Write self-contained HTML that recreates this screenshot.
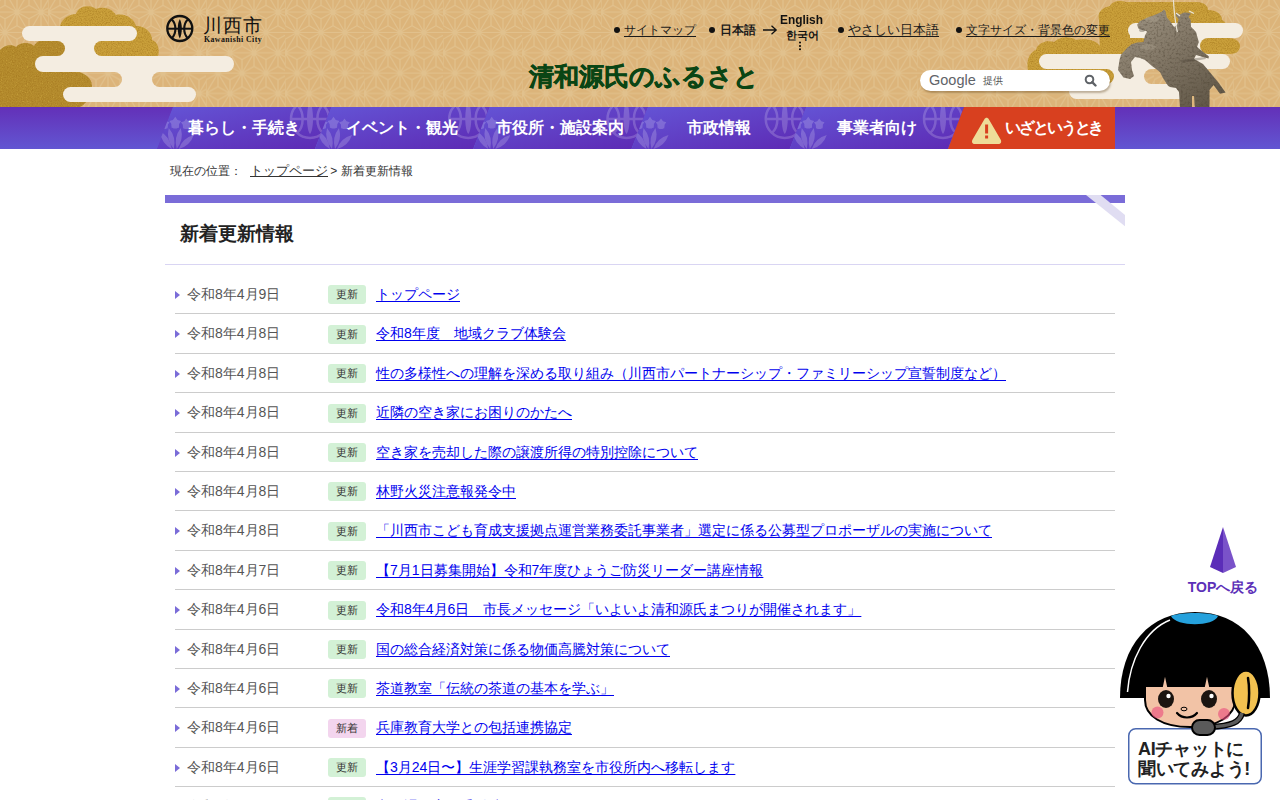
<!DOCTYPE html>
<html lang="ja"><head><meta charset="utf-8"><title>新着更新情報</title>
<style>
html,body{margin:0;padding:0;background:#fff;}
body{width:1280px;height:800px;overflow:hidden;position:relative;font-family:"Liberation Sans",sans-serif;color:#333;}
.abs{position:absolute;}
#hdr{position:absolute;left:0;top:0;width:1280px;height:107px;background:#dcb47a;overflow:hidden;}
#hdr svg.bg{position:absolute;left:0;top:0;}
.tl{position:absolute;top:22px;font-size:12px;line-height:16px;color:#1a1a1a;white-space:nowrap;}
.tl u{text-decoration:underline;text-underline-offset:2px;}
.dot{position:absolute;width:6px;height:6px;border-radius:50%;background:#111;}
#nav{position:absolute;left:0;top:107px;width:1280px;height:42px;background:linear-gradient(180deg,#6330b8 0%,#6256d2 100%);overflow:hidden;}
#nav .it{position:absolute;top:0;height:42px;color:#fff;font-weight:bold;font-size:16px;line-height:42px;text-align:center;white-space:nowrap;}
#crumb{position:absolute;left:170px;top:163px;font-size:12px;line-height:16px;color:#333;white-space:nowrap;}
#crumb a{color:#333;}
#bar{position:absolute;left:165px;top:195px;width:960px;height:8px;background:#7a6cd8;}
#h1{position:absolute;left:180px;top:220.5px;font-size:19px;line-height:26px;font-weight:bold;color:#222;margin:0;}
#hl{position:absolute;left:165px;top:264px;width:960px;height:1px;background:#d9d5f3;}
ul#list{position:absolute;left:175px;top:275px;width:940px;margin:0;padding:0;list-style:none;}
#list li{position:relative;height:38.4px;border-bottom:1px solid #ccc;font-size:14px;line-height:38.4px;white-space:nowrap;}
#list .arr{position:absolute;left:0;top:16px;width:0;height:0;border-left:5px solid #7a6cd8;border-top:4px solid transparent;border-bottom:4px solid transparent;}
#list .dt{position:absolute;left:12px;top:0;color:#555;}
#list .bd{position:absolute;left:153px;top:10.4px;width:38px;height:19px;line-height:19px;border-radius:3px;background:#d3f1d6;color:#333;font-size:11px;text-align:center;}
#list .bd.nw{background:#f3d5ee;}
#list a{position:absolute;left:201px;top:0;color:#0000ee;text-decoration:underline;text-underline-offset:2px;}
#totop{position:absolute;left:1180px;top:525px;width:86px;height:72px;}
#totop span{position:absolute;left:0;top:53px;width:86px;text-align:center;font-size:14px;font-weight:bold;color:#5c30b8;line-height:18px;}
</style></head><body>
<div id="hdr">
<svg class="bg" width="1280" height="107" viewBox="0 0 1280 107">
<defs>
<pattern id="asa" patternUnits="userSpaceOnUse" x="48" y="12.1" width="79" height="40.666">
<path d="M-1 0L80 0M-1 20.33L80 20.33M-1 40.67L80 40.67M-24 0L-36 20.33M-24 0L-12 20.33M0 0L-12 20.33M0 0L12 20.33M24 0L12 20.33M24 0L36 20.33M48 0L36 20.33M48 0L60 20.33M72 0L60 20.33M72 0L84 20.33M96 0L84 20.33M96 0L108 20.33M-12 6.78L-24 0M-12 6.78L0 0M-12 6.78L-12 20.33M12 6.78L0 0M12 6.78L24 0M12 6.78L12 20.33M36 6.78L24 0M36 6.78L48 0M36 6.78L36 20.33M60 6.78L48 0M60 6.78L72 0M60 6.78L60 20.33M84 6.78L72 0M84 6.78L96 0M84 6.78L84 20.33M108 6.78L96 0M108 6.78L120 0M108 6.78L108 20.33M0 13.56L-12 20.33M0 13.56L12 20.33M0 13.56L0 0M24 13.56L12 20.33M24 13.56L36 20.33M24 13.56L24 0M48 13.56L36 20.33M48 13.56L60 20.33M48 13.56L48 0M72 13.56L60 20.33M72 13.56L84 20.33M72 13.56L72 0M96 13.56L84 20.33M96 13.56L108 20.33M96 13.56L96 0M120 13.56L108 20.33M120 13.56L132 20.33M120 13.56L120 0M-12 20.33L-24 40.67M-12 20.33L0 40.67M12 20.33L0 40.67M12 20.33L24 40.67M36 20.33L24 40.67M36 20.33L48 40.67M60 20.33L48 40.67M60 20.33L72 40.67M84 20.33L72 40.67M84 20.33L96 40.67M108 20.33L96 40.67M108 20.33L120 40.67M0 27.11L-12 20.33M0 27.11L12 20.33M0 27.11L0 40.67M24 27.11L12 20.33M24 27.11L36 20.33M24 27.11L24 40.67M48 27.11L36 20.33M48 27.11L60 20.33M48 27.11L48 40.67M72 27.11L60 20.33M72 27.11L84 20.33M72 27.11L72 40.67M96 27.11L84 20.33M96 27.11L108 20.33M96 27.11L96 40.67M120 27.11L108 20.33M120 27.11L132 20.33M120 27.11L120 40.67M-12 33.89L-24 40.67M-12 33.89L0 40.67M-12 33.89L-12 20.33M12 33.89L0 40.67M12 33.89L24 40.67M12 33.89L12 20.33M36 33.89L24 40.67M36 33.89L48 40.67M36 33.89L36 20.33M60 33.89L48 40.67M60 33.89L72 40.67M60 33.89L60 20.33M84 33.89L72 40.67M84 33.89L96 40.67M84 33.89L84 20.33M108 33.89L96 40.67M108 33.89L120 40.67M108 33.89L108 20.33" stroke="#e1c18d" stroke-width="1.2" fill="none"/>
</pattern>
<linearGradient id="gold" x1="0" y1="0" x2="1" y2="1">
<stop offset="0" stop-color="#c9a232"/><stop offset="0.5" stop-color="#b8922c"/><stop offset="1" stop-color="#caa63a"/>
</linearGradient>
<filter id="goldtex" x="0" y="0" width="100%" height="100%" color-interpolation-filters="sRGB"><feTurbulence type="fractalNoise" baseFrequency="0.8" numOctaves="2" seed="7" result="n"/><feColorMatrix in="n" type="matrix" values="0 0 0 0 0.62  0 0 0 0 0.44  0 0 0 0 0.1  1.4 0 0 0 -0.6" result="d"/><feColorMatrix in="n" type="matrix" values="0 0 0 0 0.88  0 0 0 0 0.74  0 0 0 0 0.3  0 -1.5 0 0 0.62" result="l"/><feComposite in="d" in2="SourceAlpha" operator="in" result="d2"/><feComposite in="l" in2="SourceAlpha" operator="in" result="l2"/><feMerge><feMergeNode in="SourceGraphic"/><feMergeNode in="d2"/><feMergeNode in="l2"/></feMerge></filter>
<mask id="mL" maskUnits="userSpaceOnUse" x="0" y="0" width="300" height="107">
<rect x="22" y="26" width="115" height="15" rx="7.5" fill="#fff"/>
<rect x="35" y="56" width="199" height="16" rx="8" fill="#fff"/>
<rect x="63" y="87" width="133" height="15" rx="7.5" fill="#fff"/>
<rect x="45" y="36" width="70" height="24" fill="#fff"/>
<rect x="100" y="67" width="75" height="24" fill="#fff"/>
<rect x="-60" y="41" width="125" height="15" rx="7.5" fill="#000"/>
<rect x="94" y="41" width="120" height="15" rx="7.5" fill="#000"/>
<rect x="-60" y="72" width="182" height="15" rx="7.5" fill="#000"/>
<rect x="152" y="72" width="120" height="15" rx="7.5" fill="#000"/>
</mask>
<mask id="mR" maskUnits="userSpaceOnUse" x="1000" y="0" width="280" height="107">
<rect x="1128" y="23" width="115" height="15" rx="7.5" fill="#fff"/>
<rect x="1039" y="54" width="191" height="15" rx="7.5" fill="#fff"/>
<rect x="1069" y="84" width="118" height="15" rx="7.5" fill="#fff"/>
<rect x="1130" y="33" width="90" height="26" fill="#fff"/>
<rect x="1095" y="64" width="60" height="25" fill="#fff"/>
<rect x="1000" y="38" width="150" height="16" rx="8" fill="#000"/>
<rect x="1200" y="38" width="120" height="16" rx="8" fill="#000"/>
<rect x="1000" y="69" width="114" height="15" rx="7.5" fill="#000"/>
<rect x="1144" y="69" width="150" height="15" rx="7.5" fill="#000"/>
</mask>
</defs>
<rect width="1280" height="107" fill="url(#asa)"/>
<!-- left gold cloud -->
<g fill="#c99f3a" filter="url(#goldtex)">
<path d="M60 56 L60 26 C62 18 70 14 76 14 C78 6 90 4 96 9 C102 6 112 8 116 15 C124 13 134 18 136 26 C146 26 152 33 152 40 C158 42 160 50 158 56 Z"/>
<path fill="#b58c2e" d="M0 107 L0 50 C4 45 12 44 16 47 C20 42 30 42 34 46 C36 42 40 40 46 40 L66 40 L66 70 C80 70 92 76 92 86 C92 96 86 104 80 107 Z"/>
</g>
<rect x="0" y="0" width="240" height="107" fill="#f4ede1" mask="url(#mL)"/>
<!-- right gold cloud -->
<g fill="#c99f3a" filter="url(#goldtex)">
<path d="M1099 20 C1097 12 1102 8 1110 6 C1112 1 1120 0 1126 2 L1196 2 C1204 2 1208 6 1208 10 C1216 10 1222 14 1222 20 C1226 22 1228 26 1226 30 L1228 38 C1236 38 1240 42 1240 46 C1240 51 1236 54 1230 54 L1100 54 Z"/>
<path d="M1028 70 C1026 60 1030 52 1036 50 C1038 42 1048 40 1054 42 C1060 36 1070 36 1076 40 C1086 38 1096 40 1100 46 L1140 46 L1140 69 L1110 69 C1116 72 1116 80 1112 84 L1028 84 Z"/>
</g>
<rect x="1000" y="0" width="280" height="107" fill="#f4ede1" mask="url(#mR)"/>
</svg>
<!-- logo -->
<svg class="abs" style="left:165px;top:14px" width="30" height="30" viewBox="0 0 30 30">
<circle cx="14.8" cy="14.5" r="12.5" fill="none" stroke="#111" stroke-width="2.3"/>
<path d="M2.3 14.7H27.3" stroke="#111" stroke-width="2"/>
<path d="M14.8 5C12.1 9.5 12.1 19.9 14.8 24.4C17.5 19.9 17.5 9.5 14.8 5Z" fill="#111"/>
<path d="M6.8 5.4C11.6 10 11.6 19.6 6.8 24.2M22.8 5.4C18 10 18 19.6 22.8 24.2" stroke="#111" stroke-width="2.1" fill="none"/>
</svg>
<div class="abs" style="left:203px;top:14.5px;font-size:19px;line-height:22px;color:#111;letter-spacing:1px;">川西市</div>
<div class="abs" style="left:204px;top:34.5px;font-family:'Liberation Serif',serif;font-weight:bold;font-size:7.8px;line-height:9px;color:#111;letter-spacing:0.45px;">Kawanishi City</div>
<!-- top links -->
<div class="dot" style="left:614px;top:27px"></div>
<div class="tl" style="left:624px"><u>サイトマップ</u></div>
<div class="dot" style="left:709px;top:27px"></div>
<div class="tl" style="left:720px;font-weight:bold;">日本語</div>
<svg class="abs" style="left:762px;top:24px" width="16" height="12" viewBox="0 0 16 12"><path d="M1 6H14M9.5 1.8L14.2 6L9.5 10.2" stroke="#111" stroke-width="1.3" fill="none"/></svg>
<div class="abs" style="left:780px;top:12px;font-size:13px;line-height:15px;font-weight:bold;color:#111;transform:scaleX(0.915);transform-origin:0 0;">English</div>
<div class="abs" style="left:786px;top:29px;font-size:10.5px;line-height:12px;color:#111;font-weight:bold;">한국어</div>
<svg class="abs" style="left:798px;top:41px" width="4" height="10" viewBox="0 0 4 10"><circle cx="2" cy="1.6" r="1"/><circle cx="2" cy="4.9" r="1"/><circle cx="2" cy="8.2" r="1"/></svg>
<div class="dot" style="left:838px;top:27px"></div>
<div class="tl" style="left:848px;font-size:13.3px"><u>やさしい日本語</u></div>
<div class="dot" style="left:956px;top:27px"></div>
<div class="tl" style="left:966px"><u>文字サイズ・背景色の変更</u></div>
<!-- title -->
<div class="abs" style="left:529px;top:61px;font-family:'Liberation Serif',serif;font-weight:bold;font-size:25px;line-height:32px;color:#0a4514;-webkit-text-stroke:0.6px #0a4514;white-space:nowrap;">清和源氏のふるさと</div>
<!-- search -->
<div class="abs" style="left:920px;top:70px;width:190px;height:21px;border-radius:11px;background:#fff;box-shadow:1px 2px 2px rgba(90,60,20,0.35);">
<span class="abs" style="left:9px;top:1px;font-size:14.5px;line-height:18px;color:#5f6368;">Google</span>
<span class="abs" style="left:63px;top:4px;font-size:10px;line-height:13px;color:#555;">提供</span>
<svg class="abs" style="left:164px;top:4px" width="13" height="13" viewBox="0 0 13 13"><circle cx="5.5" cy="5.5" r="3.8" fill="none" stroke="#5f6368" stroke-width="2"/><path d="M8.2 8.2L11.5 11.5" stroke="#5f6368" stroke-width="2.4" stroke-linecap="round"/></svg>
</div>
<!-- statue -->
<svg class="abs" style="left:1110px;top:0" width="130" height="107" viewBox="0 0 130 107">
<defs><filter id="stex" x="0" y="0" width="100%" height="100%" color-interpolation-filters="sRGB"><feTurbulence type="fractalNoise" baseFrequency="0.45" numOctaves="2" seed="11" result="n"/><feColorMatrix in="n" type="matrix" values="0 0 0 0 0.3  0 0 0 0 0.26  0 0 0 0 0.2  1.3 0 0 0 -0.62" result="d"/><feComposite in="d" in2="SourceAlpha" operator="in" result="d2"/><feMerge><feMergeNode in="SourceGraphic"/><feMergeNode in="d2"/></feMerge></filter><linearGradient id="stg" x1="0" y1="0" x2="0.8" y2="1"><stop offset="0" stop-color="#a09685"/><stop offset="0.45" stop-color="#857a69"/><stop offset="1" stop-color="#625848"/></linearGradient></defs>
<path d="M27.1 24.8 L30.0 21.0 L35.0 18.8 L47.0 13.9 L52.0 11.5 L53.8 9.5 L55.5 11.0 L56.8 17.3 L60.5 21.8 L64.0 27.0 L67.0 25.0 L68.7 19.0 L66.0 16.0 L66.0 12.7 L70.0 14.5 L74.0 12.5 L79.0 12.7 L81.0 13.5 L78.5 17.0 L80.8 20.0 L81.0 26.8 L86.0 32.0 L88.8 42.0 L87.0 47.0 L98.9 56.6 L98.5 58.4 L86.0 55.0 L84.0 59.0 L93.0 64.0 L100.9 73.6 L108.0 82.0 L115.6 92.4 L110.0 93.7 L103.5 85.0 L99.5 90.0 L99.5 107.0 L84.8 107.0 L84.0 96.0 L82.0 96.0 L82.0 107.0 L70.0 107.0 L69.0 92.0 L66.0 88.0 L60.0 87.0 L58.0 85.7 L53.0 78.0 L50.0 72.0 L42.0 66.0 L35.0 60.0 L30.0 58.0 L25.0 57.0 L21.0 62.0 L22.0 70.0 L24.0 76.0 L20.0 79.0 L13.4 77.6 L8.0 70.0 L9.5 60.0 L11.0 54.8 L17.0 48.0 L21.5 44.3 L27.0 42.5 L33.5 42.0 L35.0 35.3 L37.3 31.5 L32.0 30.0 L28.3 28.5Z" fill="url(#stg)" filter="url(#stex)"/>
<g fill="#b5ab98" opacity="0.3"><ellipse cx="42" cy="19" rx="7" ry="3"/><ellipse cx="38" cy="47" rx="8" ry="3"/></g>
<g fill="#4f463a" opacity="0.35"><ellipse cx="32" cy="30" rx="3" ry="2"/><path d="M70 60 L95 57 L96 59 L72 63Z"/></g>
<path d="M63.4 0 C 64 10 65 22 67.4 32" stroke="#e8e2d4" stroke-width="1.2" fill="none"/>
<path d="M66 13 L70 16 M79 11 L84 13.5" stroke="#ece6d6" stroke-width="1.3"/>
</svg>
</div>
<div id="nav"><svg class="abs" style="left:0;top:0" width="1280" height="42" viewBox="0 0 1280 42"><defs><linearGradient id="ng" x1="0" y1="0" x2="1" y2="1"><stop offset="0" stop-color="#6455d6"/><stop offset="1" stop-color="#5d29b3"/></linearGradient><g id="rin" fill="#fff"><path d="M-1.0 42.0Q-2.4 29.9 -13.0 24.0Q-11.6 36.1 -1.0 42.0Z"/><path d="M1.0 42.0Q3.9 30.2 -4.0 21.0Q-6.9 32.8 1.0 42.0Z"/><path d="M4.0 42.0Q11.4 32.5 8.0 21.0Q0.6 30.5 4.0 42.0Z"/><path d="M6.0 42.0Q17.3 39.0 21.0 28.0Q9.7 31.0 6.0 42.0Z"/><path d="M2.5 9.8 L4.8 12.9 L8.4 14.1 L6.2 17.2 L6.1 21.0 L2.5 19.8 L-1.1 21.0 L-1.2 17.2 L-3.4 14.1 L0.2 12.9Z"/><circle cx="2.5" cy="17.9" r="3.7"/><path d="M13.5 11.4 L15.5 14.2 L18.8 15.3 L16.8 18.1 L16.8 21.5 L13.5 20.5 L10.2 21.5 L10.2 18.1 L8.2 15.3 L11.5 14.2Z"/><circle cx="13.5" cy="18.7" r="3.4"/><path d="M-8.5 11.4 L-6.5 14.2 L-3.2 15.3 L-5.2 18.1 L-5.2 21.5 L-8.5 20.5 L-11.8 21.5 L-11.8 18.1 L-13.8 15.3 L-10.5 14.2Z"/><circle cx="-8.5" cy="18.7" r="3.4"/></g><g id="mon" fill="none" stroke="#fff" stroke-width="2.5"><circle cx="0" cy="12" r="19"/><path d="M-19 12H19"/><path d="M-13 -2C-5.5 4 -5.5 20 -13 26M13 -2C5.5 4 5.5 20 13 26"/><path d="M0 -6C-4 2 -4 22 0 27C4 22 4 2 0 -6Z" fill="#fff" stroke="none"/></g></defs><clipPath id="c0"><polygon points="172.75,0 331.00,0 315.00,42 156.75,42"/></clipPath><g clip-path="url(#c0)"><polygon points="172.75,0 331.00,0 315.00,42 156.75,42" fill="url(#ng)"/><use href="#rin" x="172.75" y="0" opacity="0.19"/><use href="#mon" x="310.00" y="0" opacity="0.19"/></g><clipPath id="c1"><polygon points="331.00,0 489.25,0 473.25,42 315.00,42"/></clipPath><g clip-path="url(#c1)"><polygon points="331.00,0 489.25,0 473.25,42 315.00,42" fill="url(#ng)"/><use href="#rin" x="331.00" y="0" opacity="0.19"/><use href="#mon" x="468.25" y="0" opacity="0.19"/></g><clipPath id="c2"><polygon points="489.25,0 647.50,0 631.50,42 473.25,42"/></clipPath><g clip-path="url(#c2)"><polygon points="489.25,0 647.50,0 631.50,42 473.25,42" fill="url(#ng)"/><use href="#rin" x="489.25" y="0" opacity="0.19"/><use href="#mon" x="626.50" y="0" opacity="0.19"/></g><clipPath id="c3"><polygon points="647.50,0 805.75,0 789.75,42 631.50,42"/></clipPath><g clip-path="url(#c3)"><polygon points="647.50,0 805.75,0 789.75,42 631.50,42" fill="url(#ng)"/><use href="#rin" x="647.50" y="0" opacity="0.19"/><use href="#mon" x="784.75" y="0" opacity="0.19"/></g><clipPath id="c4"><polygon points="805.75,0 964.00,0 948.00,42 789.75,42"/></clipPath><g clip-path="url(#c4)"><polygon points="805.75,0 964.00,0 948.00,42 789.75,42" fill="url(#ng)"/><use href="#rin" x="805.75" y="0" opacity="0.19"/><use href="#mon" x="943.00" y="0" opacity="0.19"/></g><polygon points="964,0 1115,0 1115,42 948,42" fill="#d8401f"/><path d="M984.4 12.2C985.6 10.2 987.6 10.2 988.8 12.2L1000.6 32.4C1001.9 34.6 1000.9 37 998.2 37H975C972.3 37 971.3 34.6 972.6 32.4Z" fill="#eedc98"/><rect x="985.1" y="17.5" width="3" height="9" fill="#d8401f"/><rect x="985.1" y="28.5" width="3" height="3" fill="#d8401f"/></svg><div class="it" style="left:163.90px;width:160px">暮らし・手続き</div><div class="it" style="left:322.15px;width:160px">イベント・観光</div><div class="it" style="left:480.40px;width:160px">市役所・施設案内</div><div class="it" style="left:638.65px;width:160px">市政情報</div><div class="it" style="left:796.90px;width:160px">事業者向け</div><div class="it" style="left:1005px;width:110px;text-align:left;letter-spacing:-2.1px">いざというとき</div></div>
<div id="crumb"><span class="abs" style="left:0;top:0">現在の位置：</span><a class="abs" href="#" style="left:80px;top:0;font-size:12.8px;">トップページ</a><span class="abs" style="left:157px;top:0">&nbsp;&gt; 新着更新情報</span></div>
<div id="bar"></div>
<svg class="abs" style="left:1085px;top:195px" width="40" height="32" viewBox="0 0 40 32"><path d="M1 0H15.6L40 20V31.3Z" fill="#e0ddf2"/></svg>
<h1 id="h1">新着更新情報</h1>
<div id="hl"></div>
<ul id="list"><li><span class="arr"></span><span class="dt">令和8年4月9日</span><span class="bd ">更新</span><a href="#">トップページ</a></li><li><span class="arr"></span><span class="dt">令和8年4月8日</span><span class="bd ">更新</span><a href="#">令和8年度　地域クラブ体験会</a></li><li><span class="arr"></span><span class="dt">令和8年4月8日</span><span class="bd ">更新</span><a href="#">性の多様性への理解を深める取り組み（川西市パートナーシップ・ファミリーシップ宣誓制度など）</a></li><li><span class="arr"></span><span class="dt">令和8年4月8日</span><span class="bd ">更新</span><a href="#">近隣の空き家にお困りのかたへ</a></li><li><span class="arr"></span><span class="dt">令和8年4月8日</span><span class="bd ">更新</span><a href="#">空き家を売却した際の譲渡所得の特別控除について</a></li><li><span class="arr"></span><span class="dt">令和8年4月8日</span><span class="bd ">更新</span><a href="#">林野火災注意報発令中</a></li><li><span class="arr"></span><span class="dt">令和8年4月8日</span><span class="bd ">更新</span><a href="#">「川西市こども育成支援拠点運営業務委託事業者」選定に係る公募型プロポーザルの実施について</a></li><li><span class="arr"></span><span class="dt">令和8年4月7日</span><span class="bd ">更新</span><a href="#">【7月1日募集開始】令和7年度ひょうご防災リーダー講座情報</a></li><li><span class="arr"></span><span class="dt">令和8年4月6日</span><span class="bd ">更新</span><a href="#">令和8年4月6日　市長メッセージ「いよいよ清和源氏まつりが開催されます」</a></li><li><span class="arr"></span><span class="dt">令和8年4月6日</span><span class="bd ">更新</span><a href="#">国の総合経済対策に係る物価高騰対策について</a></li><li><span class="arr"></span><span class="dt">令和8年4月6日</span><span class="bd ">更新</span><a href="#">茶道教室「伝統の茶道の基本を学ぶ」</a></li><li><span class="arr"></span><span class="dt">令和8年4月6日</span><span class="bd nw">新着</span><a href="#">兵庫教育大学との包括連携協定</a></li><li><span class="arr"></span><span class="dt">令和8年4月6日</span><span class="bd ">更新</span><a href="#">【3月24日〜】生涯学習課執務室を市役所内へ移転します</a></li><li><span class="arr"></span><span class="dt">令和8年4月6日</span><span class="bd ">更新</span><a href="#">市民課の窓口受付時間について</a></li></ul>
<div id="totop">
<svg class="abs" style="left:30px;top:2px" width="26" height="46" viewBox="0 0 26 46"><path d="M13 0L0 40L13 46Z" fill="#5b2db8"/><path d="M13 0L26 40L13 46Z" fill="#7a52c9"/></svg>
<span>TOPへ戻る</span>
</div>
<svg class="abs" style="left:1110px;top:600px" width="170" height="200" viewBox="0 0 170 200">
<path d="M10 98 C10 45 40 12 85 12 C130 12 160 45 160 98 L125 98 L35 98 Z" fill="#000"/>
<path d="M35 86 L52 86 L55 72 L58 86 L94 86 L97 72 L100 86 L125 86 L125 100 C125 116 108 127 80 127 C52 127 35 116 35 100 Z" fill="#f2c3a6" stroke="#000" stroke-width="2"/>
<path d="M61 16 C70 12 100 12 108 16 C104 27 66 27 61 16 Z" fill="#25a1dc"/>
<path d="M17.5 92 C20 60 35 30 60 20" stroke="#fff" stroke-width="1.5" fill="none"/>
<ellipse cx="56" cy="99" rx="8" ry="9" fill="#1a1410"/><ellipse cx="99" cy="99" rx="8" ry="9" fill="#1a1410"/>
<circle cx="58.5" cy="96" r="2.2" fill="#fff"/><circle cx="101.5" cy="96" r="2.2" fill="#fff"/>
<circle cx="47.5" cy="112.5" r="6" fill="#ea4a7c" opacity="0.6"/><circle cx="114" cy="114" r="6" fill="#ea4a7c" opacity="0.6"/>
<ellipse cx="74" cy="109" rx="3" ry="1.8" fill="none" stroke="#000" stroke-width="1"/>
<path d="M67 113 C72 119 82 119 87 113" stroke="#000" stroke-width="2.2" fill="none" stroke-linecap="round"/>
<ellipse cx="136" cy="93" rx="13.5" ry="22.5" fill="#f2c150" stroke="#000" stroke-width="2.5"/>
<path d="M138 78 C139.5 86 139.5 100 138 108" stroke="#000" stroke-width="2.5" fill="none" stroke-linecap="round"/>
<rect x="18.75" y="128.75" width="132.5" height="55" rx="7" fill="#fff" stroke="#4a68b0" stroke-width="1.5"/>
<path d="M132 113 C130 122 122 126 100 127" stroke="#000" stroke-width="6" fill="none"/>
<path d="M132 113 C130 122 122 126 100 127" stroke="#5a5a5a" stroke-width="3.5" fill="none"/>
<rect x="82" y="120" width="23" height="15" rx="7.5" fill="#5a5a5a" stroke="#000" stroke-width="2"/>
</svg>
<div class="abs" style="left:1138px;top:739px;width:124px;font-size:18px;line-height:20px;font-weight:bold;color:#222;white-space:nowrap;letter-spacing:-0.3px">AIチャットに<br>聞いてみよう!</div>
</body></html>
